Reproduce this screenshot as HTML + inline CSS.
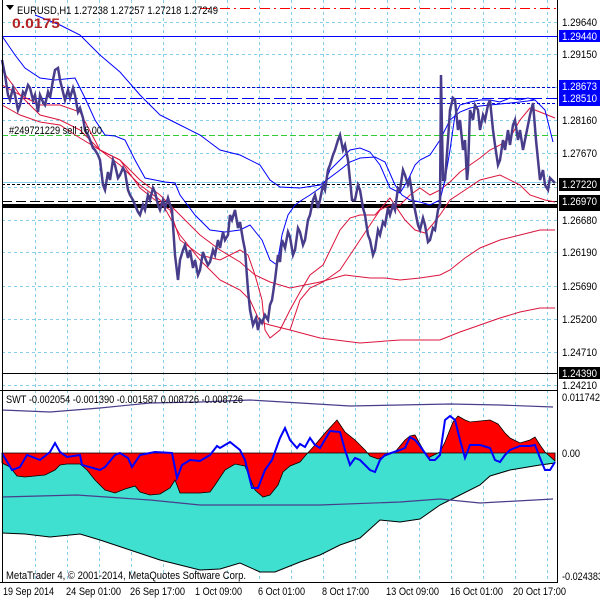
<!DOCTYPE html>
<html><head><meta charset="utf-8"><style>
html,body{margin:0;padding:0;background:#fff;}
svg{display:block;font-family:"Liberation Sans",sans-serif;}
</style></head><body>
<svg width="600" height="600" viewBox="0 0 600 600" xmlns="http://www.w3.org/2000/svg">
<rect width="600" height="600" fill="#fff"/>
<g stroke="#87ceeb" stroke-dasharray="3,3" stroke-width="1">
<line x1="35.5" y1="0" x2="35.5" y2="582"/><line x1="67.5" y1="0" x2="67.5" y2="582"/><line x1="99.5" y1="0" x2="99.5" y2="582"/><line x1="131.5" y1="0" x2="131.5" y2="582"/><line x1="163.5" y1="0" x2="163.5" y2="582"/><line x1="195.5" y1="0" x2="195.5" y2="582"/><line x1="227.5" y1="0" x2="227.5" y2="582"/><line x1="259.5" y1="0" x2="259.5" y2="582"/><line x1="291.5" y1="0" x2="291.5" y2="582"/><line x1="323.5" y1="0" x2="323.5" y2="582"/><line x1="355.5" y1="0" x2="355.5" y2="582"/><line x1="387.5" y1="0" x2="387.5" y2="582"/><line x1="419.5" y1="0" x2="419.5" y2="582"/><line x1="451.5" y1="0" x2="451.5" y2="582"/><line x1="483.5" y1="0" x2="483.5" y2="582"/><line x1="515.5" y1="0" x2="515.5" y2="582"/><line x1="547.5" y1="0" x2="547.5" y2="582"/>
</g>
<g stroke="#87ceeb" stroke-dasharray="3,3">
<line x1="2" y1="22.5" x2="557" y2="22.5"/><line x1="2" y1="54.5" x2="557" y2="54.5"/><line x1="2" y1="87.5" x2="557" y2="87.5"/><line x1="2" y1="120.5" x2="557" y2="120.5"/><line x1="2" y1="153.5" x2="557" y2="153.5"/><line x1="2" y1="187.5" x2="557" y2="187.5"/><line x1="2" y1="220.5" x2="557" y2="220.5"/><line x1="2" y1="252.5" x2="557" y2="252.5"/><line x1="2" y1="286.5" x2="557" y2="286.5"/><line x1="2" y1="319.5" x2="557" y2="319.5"/><line x1="2" y1="352.5" x2="557" y2="352.5"/><line x1="2" y1="385.5" x2="557" y2="385.5"/>
</g>
<rect x="0" y="388" width="557" height="3" fill="#fff"/>
<line x1="200" y1="8.5" x2="557" y2="8.5" stroke="#ff0000" stroke-dasharray="10,4,2,4"/>
<line x1="2" y1="36.5" x2="557" y2="36.5" stroke="#0000ff"/>
<line x1="2" y1="87.5" x2="557" y2="87.5" stroke="#0000cd" stroke-dasharray="3,2"/>
<line x1="2" y1="98.5" x2="557" y2="98.5" stroke="#0000ff" stroke-dasharray="12,4"/>
<line x1="2" y1="103.5" x2="557" y2="103.5" stroke="#0000cd" stroke-dasharray="3,2"/>
<line x1="2" y1="135.5" x2="557" y2="135.5" stroke="#32cd32" stroke-dasharray="6,3"/>
<line x1="2" y1="182.5" x2="557" y2="182.5" stroke="#87ceeb"/>
<line x1="2" y1="184.5" x2="557" y2="184.5" stroke="#000" stroke-dasharray="3,2"/>
<line x1="2" y1="201.5" x2="557" y2="201.5" stroke="#000" stroke-dasharray="10,4"/>
<rect x="2" y="204" width="555" height="4" fill="#000"/>
<line x1="2" y1="373.5" x2="557" y2="373.5" stroke="#000"/>
<g fill="none" stroke="#dc143c" stroke-width="1">
<polyline points="2,85 20,95 40,115 60,120 80,130 100,150 120,165 140,185 160,200 180,235 200,260 220,280 240,290 250,300 260,322 270,325 290,330 320,338 360,343 400,340 440,340 460,332 480,325 500,318 520,312 540,308 555,308"/>
<polyline points="2,105 20,115 40,122 60,125 80,138 100,150 120,160 140,180 160,195 175,210 200,235 220,250 240,262 255,275 270,282 290,288 320,282 345,275 370,278 385,278 400,280 420,278 440,275 450,270 465,258 480,248 500,240 520,235 540,230 555,230"/>
<polyline points="2,70 20,95 40,105 60,105 80,112 100,150 120,160 140,188 155,200 170,210 180,240 200,255 220,260 240,250 248,255 255,275 262,300 265,330 270,338 280,330 290,310 300,292 310,275 323,265 340,230 350,218 360,215 375,215 390,198 405,220 415,230 425,233 432,225 440,215 450,200 465,190 480,180 500,175 520,185 530,195 545,200 555,202"/>
<polyline points="290,330 300,300 310,288 323,282 340,270 350,255 360,240 370,225 380,210 390,205 400,205 410,195 420,188 430,195 440,190 450,182 460,172 470,165 480,158 490,150 500,145 510,138 520,120 530,108 540,112 555,118"/>
</g>
<g fill="none" stroke="#0000ff" stroke-width="1">
<polyline points="2,36 15,55 25,68 40,78 55,80 75,78 85,98 95,120 105,135 115,136 125,140 135,160 145,178 155,180 165,182 175,183 180,195 195,215 210,230 225,232 240,230 250,225 262,240 270,260 277,265 282,235 288,215 295,205 302,200 310,195 320,188 325,182 330,170 340,160 350,150 360,148 370,152 380,165 390,188 400,193 408,180 415,165 420,160 430,155 440,140 450,120 460,112 470,108 480,106 500,104 520,102 535,100 545,110 553,142"/>
<polyline points="35,15 60,25 80,35 100,55 120,72 140,95 160,115 180,125 200,135 220,150 240,155 260,165 270,180 280,187 300,188 320,185 340,170 350,162 360,158 375,157 385,162 395,185 402,195 410,200 420,202 430,205 440,200 445,180 450,150 455,115 460,105 470,102 480,100 490,100 500,102 510,98 520,100 528,98 535,100"/>
</g>
<polyline fill="none" stroke="#483d8b" stroke-width="2.5" points="2,60 5,75 8,95 10,100 13,88 15,95 18,110 20,105 23,92 25,95 28,85 30,88 33,100 35,95 38,112 40,95 43,102 45,105 48,92 50,98 53,80 55,70 58,68 60,80 63,92 65,100 68,90 70,98 73,88 75,95 78,112 80,108 83,118 85,130 88,135 90,140 93,148 95,150 98,155 100,160 103,185 105,190 108,172 110,180 113,160 115,165 118,178 120,175 123,168 125,172 128,190 130,195 133,200 135,205 138,212 140,215 143,205 145,210 148,195 150,200 153,188 155,192 158,205 160,210 163,200 165,208 168,198 170,205 172,210 175,255 178,280 180,260 183,250 185,245 188,258 190,250 193,268 195,260 198,275 200,270 203,252 205,258 208,265 210,262 213,250 215,255 218,240 220,248 223,232 225,240 228,235 230,215 232,220 235,210 238,228 240,222 243,240 245,250 248,290 250,310 253,325 256,318 258,330 260,320 262,323 265,315 268,320 270,305 272,300 275,280 278,255 280,262 282,240 285,248 288,232 290,237 293,255 295,250 298,228 300,232 303,245 305,240 308,220 310,215 313,200 315,195 318,208 320,200 323,185 325,190 328,170 330,165 333,155 335,150 338,140 340,135 343,150 345,145 348,160 350,180 352,200 355,200 358,185 360,190 363,208 365,215 368,235 370,240 373,255 375,250 378,230 380,235 383,222 385,225 388,208 390,215 393,205 395,210 398,188 400,190 403,170 405,175 408,185 410,180 413,200 415,210 418,225 420,230 423,218 425,225 428,242 430,240 433,228 435,230 438,210 440,205 441,75 442,130 443,180 445,180 448,140 450,110 453,98 455,100 458,130 460,120 463,150 465,140 467,180 468,170 470,110 473,120 475,105 478,110 480,130 483,115 485,120 488,105 490,100 493,130 495,145 498,165 500,160 503,140 505,150 508,130 510,145 513,125 515,120 518,140 520,130 523,150 525,140 528,125 530,115 533,103 536,140 538,160 540,180 543,170 545,185 548,190 550,178 552,180 555,183"/>
<polygon points="6,5 14,5 10,10" fill="#000"/>
<text x="17" y="14" font-size="11" fill="#000" textLength="201" lengthAdjust="spacingAndGlyphs">EURUSD,H1  1.27238 1.27257 1.27218 1.27249</text>
<text x="12" y="28" font-size="14" font-weight="bold" fill="#b22222" textLength="48" lengthAdjust="spacingAndGlyphs">0.0175</text>
<text x="9" y="134" font-size="11" fill="#000" textLength="93" lengthAdjust="spacingAndGlyphs">#249721229 sell 16.00</text>

<line x1="0" y1="390.5" x2="557" y2="390.5" stroke="#000"/>
<polygon fill="#40e0d0" stroke="none" points="2,453 555,453 555,463 540,465 510,470 490,476 480,485 460,495 440,505 420,519 400,522 390,521 380,520 360,538 340,545 320,555 300,562 285,568 275,572 260,572 240,563 220,569 200,570 160,560 130,550 100,540 80,534 50,537 25,534 2,533"/>
<polyline fill="none" stroke="#000" points="2,533 25,534 50,537 80,534 100,540 130,550 160,560 200,570 220,569 240,563 260,572 275,572 285,568 300,562 320,555 340,545 360,538 380,520 390,521 400,522 420,519 440,505 460,495 480,485 490,476 510,470 540,465 555,463"/>
<polygon fill="#ff0000" stroke="#000" stroke-width="0.8" points="2,453 2,463 10,467 17,476 25,477 35,476 45,475 55,470 60,465 67,464 80,464 87,470 95,480 105,490 115,493 125,489 135,486 140,492 150,495 160,494 170,488 175,480 180,493 190,493 200,493 210,492 215,485 225,470 235,464 245,466 255,490 263,497 270,495 278,485 283,472 290,466 300,462 305,456 315,445 325,433 337,420 345,432 355,440 365,450 370,456 378,459 385,456 395,452 405,440 410,436 415,435 420,444 428,458 440,452 445,442 453,422 458,416 465,420 470,422 490,420 498,424 505,433 510,438 520,443 530,440 535,437 540,445 545,452 555,461 555,453"/>
<polyline fill="none" stroke="#483d8b" stroke-width="1.2" points="2,410 50,412 100,408 150,403 200,402 250,400 300,403 350,406 400,405 450,404 500,405 553,407"/>
<polyline fill="none" stroke="#483d8b" stroke-width="1.2" points="2,497 77,495 150,500 200,505 245,505 280,505 320,505 400,502 440,499 480,503 553,499"/>
<polyline fill="none" stroke="#0000ff" stroke-width="2" points="2,453 12,470 20,467 27,455 35,458 40,460 50,452 55,443 60,452 67,457 80,455 82,465 100,470 105,467 115,455 120,453 128,458 132,467 140,455 150,453 155,452 172,453 177,478 182,465 190,460 200,461 210,455 217,446 220,448 230,442 240,450 245,460 252,488 258,488 265,470 272,460 280,438 285,428 290,440 297,448 300,444 305,447 310,438 315,445 320,448 330,431 340,432 345,450 350,465 355,458 360,460 370,470 375,472 380,460 385,455 400,450 405,448 410,437 415,440 420,446 430,460 435,460 440,455 445,420 450,416 455,420 460,440 465,458 470,445 480,445 490,448 495,460 500,462 505,455 510,450 520,446 530,446 535,445 540,458 545,470 550,470 555,462"/>
<text x="6" y="403" font-size="11" fill="#000" textLength="237" lengthAdjust="spacingAndGlyphs">SWT -0.002054 -0.001390 -0.001587 0.008726 -0.008726</text>
<text x="6" y="579" font-size="11" fill="#000" textLength="240" lengthAdjust="spacingAndGlyphs">MetaTrader 4, © 2001-2014, MetaQuotes Software Corp.</text>
<line x1="2.5" y1="0" x2="2.5" y2="583" stroke="#000"/>
<line x1="0" y1="582.5" x2="558" y2="582.5" stroke="#000"/>
<line x1="557.5" y1="0" x2="557.5" y2="583" stroke="#000"/>
<g font-size="11" fill="#000" lengthAdjust="spacingAndGlyphs">
<text x="562" y="26" textLength="35" lengthAdjust="spacingAndGlyphs">1.29640</text>
<text x="562" y="58" textLength="35" lengthAdjust="spacingAndGlyphs">1.29150</text>
<text x="562" y="124" textLength="35" lengthAdjust="spacingAndGlyphs">1.28160</text>
<text x="562" y="157" textLength="35" lengthAdjust="spacingAndGlyphs">1.27670</text>
<text x="562" y="224" textLength="35" lengthAdjust="spacingAndGlyphs">1.26680</text>
<text x="562" y="256" textLength="35" lengthAdjust="spacingAndGlyphs">1.26190</text>
<text x="562" y="290" textLength="35" lengthAdjust="spacingAndGlyphs">1.25690</text>
<text x="562" y="323" textLength="35" lengthAdjust="spacingAndGlyphs">1.25200</text>
<text x="562" y="356" textLength="35" lengthAdjust="spacingAndGlyphs">1.24710</text>
<text x="562" y="389" textLength="35" lengthAdjust="spacingAndGlyphs">1.24210</text>
<text x="562" y="401" textLength="38" lengthAdjust="spacingAndGlyphs">0.011742</text>
<text x="562" y="457" textLength="18" lengthAdjust="spacingAndGlyphs">0.00</text>
<text x="562" y="580" textLength="41" lengthAdjust="spacingAndGlyphs">-0.024383</text>
</g>
<g fill="#0000ff"><rect x="559" y="30" width="41" height="12"/><rect x="559" y="80" width="41" height="12"/><rect x="559" y="92" width="41" height="14"/></g>
<g fill="#000"><rect x="559" y="178" width="41" height="13"/><rect x="559" y="195" width="41" height="16"/><rect x="559" y="367" width="41" height="12"/></g>
<g font-size="11" fill="#fff">
<text x="562" y="40" textLength="35" lengthAdjust="spacingAndGlyphs">1.29440</text><text x="562" y="90" textLength="35" lengthAdjust="spacingAndGlyphs">1.28673</text><text x="562" y="102" textLength="35" lengthAdjust="spacingAndGlyphs">1.28510</text>
<text x="562" y="188" textLength="35" lengthAdjust="spacingAndGlyphs">1.27220</text><text x="562" y="205" textLength="35" lengthAdjust="spacingAndGlyphs">1.26970</text><text x="562" y="377" textLength="35" lengthAdjust="spacingAndGlyphs">1.24390</text>
</g>
<g font-size="11" fill="#000">
<text x="3" y="595" textLength="51" lengthAdjust="spacingAndGlyphs">19 Sep 2014</text>
<text x="66" y="595" textLength="55" lengthAdjust="spacingAndGlyphs">24 Sep 01:00</text>
<text x="130" y="595" textLength="55" lengthAdjust="spacingAndGlyphs">26 Sep 17:00</text>
<text x="195" y="595" textLength="47" lengthAdjust="spacingAndGlyphs">1 Oct 09:00</text>
<text x="258" y="595" textLength="47" lengthAdjust="spacingAndGlyphs">6 Oct 01:00</text>
<text x="322" y="595" textLength="47" lengthAdjust="spacingAndGlyphs">8 Oct 17:00</text>
<text x="386" y="595" textLength="53" lengthAdjust="spacingAndGlyphs">13 Oct 09:00</text>
<text x="450" y="595" textLength="53" lengthAdjust="spacingAndGlyphs">16 Oct 01:00</text>
<text x="513" y="595" textLength="53" lengthAdjust="spacingAndGlyphs">20 Oct 17:00</text>
</g>
</svg>
</body></html>
